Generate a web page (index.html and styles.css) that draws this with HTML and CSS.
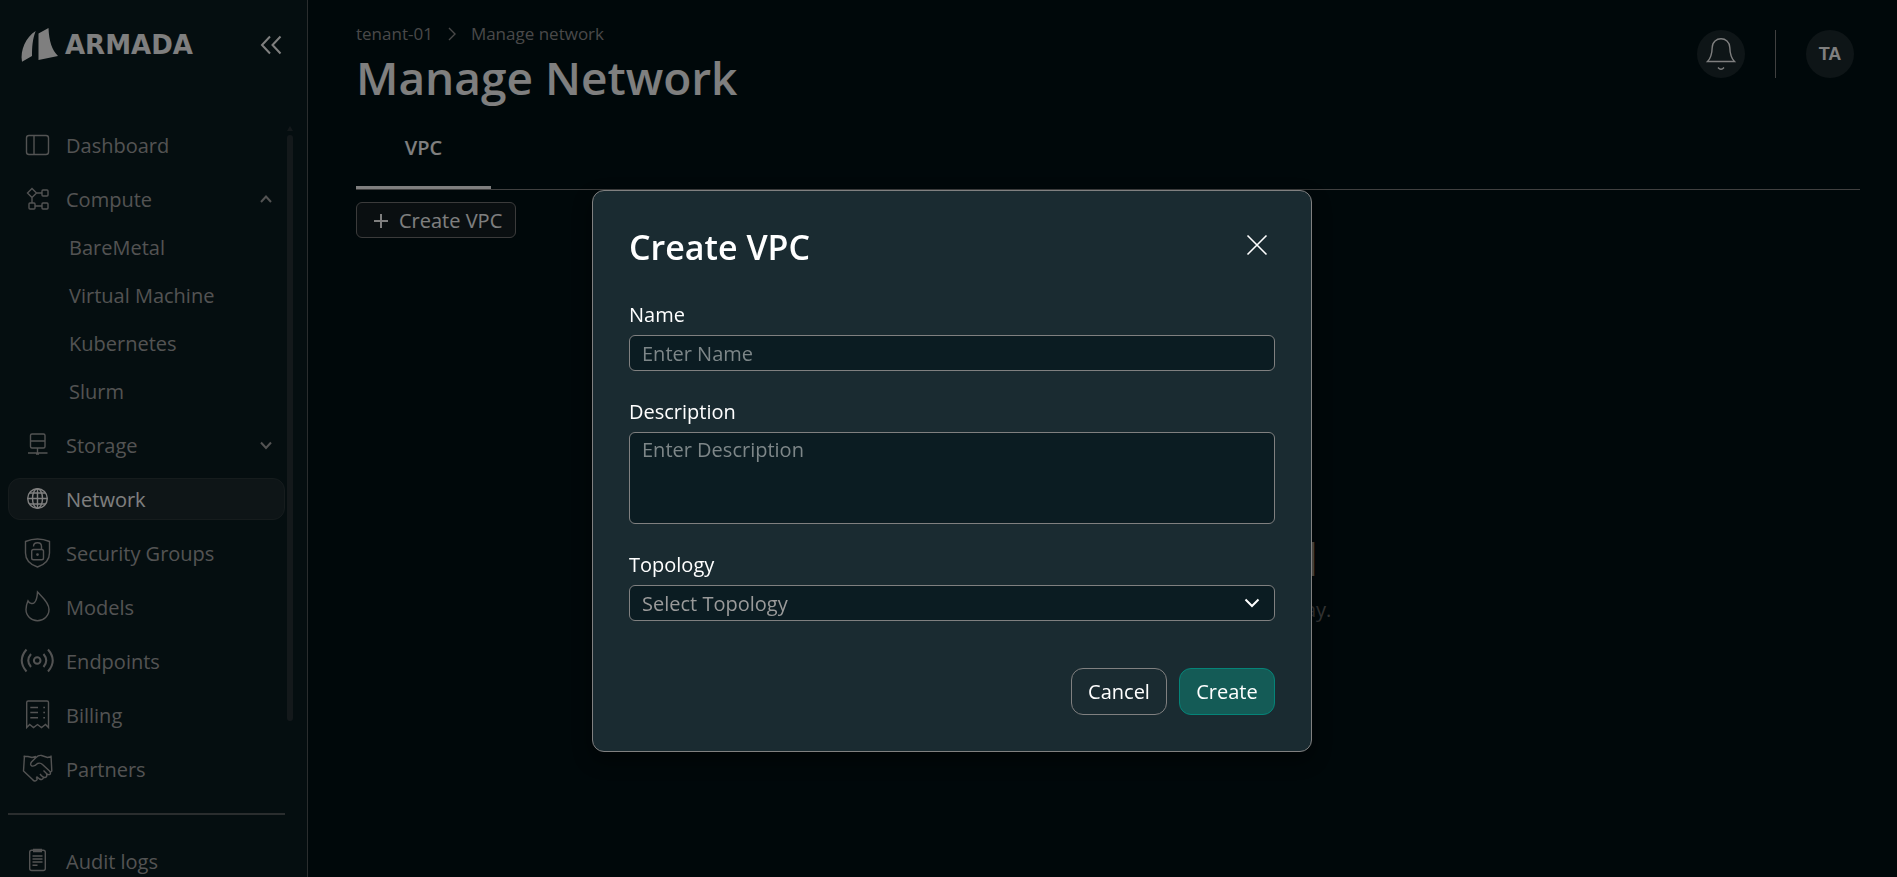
FILE: index.html
```html
<!DOCTYPE html>
<html lang="en">
<head>
    <meta charset="UTF-8">
    <meta name="viewport" content="width=device-width, initial-scale=1.0">
    <title>Manage Network</title>
    <link rel="stylesheet" href="styles.css">
</head>
<body>
    <div class="layout">
        <aside class="sidebar">
            <div class="brand">
                <svg class="brand-mark" width="40" height="36" viewBox="0 0 40 36">
                    <path d="M2 34.700C0 23 6 10 15.700 4C12.500 12 12 20 12 29Z"/>
                    <path d="M18.500 6.500L28.500 1C29 14 32 23 38 29L18.500 33Z"/>
                </svg>
                <span class="brand-name">ARMADA</span>
                <button class="collapse" aria-label="Collapse menu">
                    <svg class="icon-bold" width="24" height="24" viewBox="0 0 24 24"><path d="M11 3.500L3 12L11 20.500M21.500 3.500L13.500 12L21.500 20.500"/></svg>
                </button>
            </div>

            <div class="menu-scroll">
                <nav class="menu">
                    <a class="item" href="#">
                        <svg class="icon" viewBox="0 0 36 36"><rect x="7.500" y="8.500" width="22" height="19" rx="2.500"/><path d="M15 8.500V27.500"/></svg>
                        <span>Dashboard</span>
                    </a>
                    <a class="item" href="#">
                        <svg class="icon" viewBox="0 0 36 36"><path d="M13 7.500L17.500 12L13 16.500L8.500 12ZM17.500 12H23M13 16.500V22M16 25H23"/><rect x="23" y="9" width="6" height="6" rx="1"/><rect x="10" y="22" width="6" height="6" rx="1"/><rect x="23" y="22" width="6" height="6" rx="1"/></svg>
                        <span>Compute</span>
                        <svg class="chevron" viewBox="0 0 12 12"><path d="M1 9L6 3.500L11 9"/></svg>
                    </a>
                    <div class="submenu">
                        <a class="subitem" href="#">BareMetal</a>
                        <a class="subitem" href="#">Virtual Machine</a>
                        <a class="subitem" href="#">Kubernetes</a>
                        <a class="subitem" href="#">Slurm</a>
                    </div>
                    <a class="item" href="#">
                        <svg class="icon" viewBox="0 0 36 36"><rect x="11.500" y="7" width="14.500" height="14" rx="1.500"/><path d="M11.500 14H26M18.500 21V26.500M9 26H28.500M17 27H20"/></svg>
                        <span>Storage</span>
                        <svg class="chevron" viewBox="0 0 12 12"><path d="M1 3.500L6 9L11 3.500"/></svg>
                    </a>
                    <a class="item active" href="#">
                        <svg class="icon" viewBox="0 0 36 36"><circle cx="18.500" cy="17.500" r="9.800"/><ellipse cx="18.500" cy="17.500" rx="5" ry="9.800"/><path d="M18.500 7.500V27.500M8.500 17.500H28.500M10.500 12H26.500M10.500 23H26.500"/></svg>
                        <span>Network</span>
                    </a>
                    <a class="item" href="#">
                        <svg class="icon" viewBox="0 0 36 36"><path d="M6.500 6.500Q18.500 1.500 30.500 6.500V18Q30.500 28 18.500 32Q6.500 28 6.500 18Z"/><rect x="12.700" y="14.500" width="11.800" height="10.200" rx="1.800"/><path d="M14.500 11.500C14.500 6.500 22.500 6.500 22.500 11.500V14.500"/><circle cx="18.500" cy="19.600" r=".7"/></svg>
                        <span>Security Groups</span>
                    </a>
                    <a class="item" href="#">
                        <svg class="icon" viewBox="0 0 36 36"><path d="M18.500 3C22 7 30 13 30 20.500A11.500 11.200 0 0 1 7 20.500C7 17 7.800 14.500 9 11.800C10.500 14.500 13.500 15.500 15.500 13.500C18 11 18.300 7 18.500 3Z"/></svg>
                        <span>Models</span>
                    </a>
                    <a class="item" href="#">
                        <svg class="icon icon-bold" viewBox="0 0 36 36"><circle cx="18.200" cy="17.500" r="3.300"/><path d="M12 11Q6.500 17.500 12 24M24.500 11Q30 17.500 24.500 24M7.500 6.500Q-2 17.500 7.500 28.500M29 6.500Q38.500 17.500 29 28.500"/></svg>
                        <span>Endpoints</span>
                    </a>
                    <a class="item" href="#">
                        <svg class="icon" viewBox="0 0 36 36"><path d="M7.700 30.500V5.500Q7.700 4 9.200 4H28Q29.500 4 29.500 5.500V30.500L26.500 27.500L22.500 30.500L18.500 27.500L14.500 30.500L10.700 27.500ZM11.300 10.500H19M11.300 15.500H19M11.300 20.800H19M24.300 10.500H26M24.300 15.500H26M24.300 20.800H26"/></svg>
                        <span>Billing</span>
                    </a>
                    <a class="item" href="#">
                        <svg class="icon" viewBox="0 0 36 36"><path d="M5.500 4.500L4.500 20L13.500 28.500Q15.500 31 17.500 29.300Q19 28 17 26.500M4.500 5.500H9L13 6.500L17 5.500M32 4.500L32.800 20L31 21.500M32.500 5.500L28.500 6.500L22.500 4.500Q19.500 4 17 6.500L12.500 11Q10.500 14 13 15Q15.500 15.700 18.500 12.500Q21.500 11.500 23.500 13.500L30.500 20Q32.500 22.500 30.500 23.500Q29 24 27.500 22.500L24.500 19.500M27.500 23Q28.500 26 26 26.500Q24 26.700 21 23M24.500 26.500Q23.500 29.500 20.500 28L17.500 25.500"/></svg>
                        <span>Partners</span>
                    </a>
                    <hr>
                    <a class="item" href="#">
                        <svg class="icon" viewBox="0 0 36 36"><rect x="10.700" y="7.200" width="15.600" height="20.300" rx="2"/><path d="M14 6.500H23M14 8.500H23M13.500 13H23.500M13.500 16H23.500M13.500 19H23.500M13.500 22.200H18.500"/></svg>
                        <span>Audit logs</span>
                    </a>
                </nav>
                <div class="scrollbar">
                    <span class="scroll-arrow"></span>
                    <span class="scroll-thumb"></span>
                </div>
            </div>
        </aside>

        <main class="content">
            <header class="top">
                <div>
                    <div class="breadcrumb">
                        <a href="#">tenant-01</a>
                        <svg width="10" height="16" viewBox="0 0 10 16"><path d="M2 2L8 8L2 14"/></svg>
                        <a href="#">Manage network</a>
                    </div>
                    <h1>Manage Network</h1>
                </div>
                <div class="actions">
                    <button class="round" aria-label="Notifications">
                        <svg width="48" height="48" viewBox="0 0 48 48"><path d="M10.500 31.500C14 28 15 24 15.200 17.500C15.500 5.800 32.500 5.800 32.800 17.500C33 24 34 28 37.500 31.500ZM21 37.500Q24 41 27 37.500"/></svg>
                    </button>
                    <span class="divider"></span>
                    <button class="round avatar">TA</button>
                </div>
            </header>

            <div class="tabs">
                <button class="tab">VPC</button>
            </div>

            <button class="create-vpc">
                <svg width="16" height="16" viewBox="0 0 16 16"><path d="M8 1V15M1 8H15"/></svg>
                Create VPC
            </button>

            <section class="empty">
                <h2>No VPC Configured</h2>
                <p>There are currently no VPCs available to display.</p>
            </section>
        </main>
    </div>

    <div class="overlay">
        <form class="modal">
            <div class="modal-head">
                <h2>Create VPC</h2>
                <button type="button" class="close" aria-label="Close">
                    <svg width="22" height="22" viewBox="0 0 22 22"><path d="M1.500 1.500L20.500 20.500M20.500 1.500L1.500 20.500"/></svg>
                </button>
            </div>
            <div class="field">
                <label for="name">Name</label>
                <input id="name" type="text" placeholder="Enter Name">
            </div>
            <div class="field">
                <label for="description">Description</label>
                <textarea id="description" placeholder="Enter Description"></textarea>
            </div>
            <div class="field">
                <label for="topology">Topology</label>
                <div class="select-wrap">
                    <select id="topology">
                        <option>Select Topology</option>
                    </select>
                    <svg width="16" height="10" viewBox="0 0 16 10"><path d="M1.500 1.500L8 8L14.500 1.500"/></svg>
                </div>
            </div>
            <div class="modal-actions">
                <button type="button" class="btn">Cancel</button>
                <button type="submit" class="btn primary">Create</button>
            </div>
        </form>
    </div>
</body>
</html>
```
FILE: styles.css
```css
:root {
    --page: #001014;
    --sidebar: #0a1c20;
    --panel: #1a2b31;
    --field: #0b1c22;
    --soft: #1c2a2e;
    --line: #808080;
    --muted: #a6a6a6;
}

* {
    margin: 0;
    padding: 0;
    box-sizing: border-box;
    font-family: 'Segoe UI', 'Open Sans', sans-serif;
}

body {
    background-color: var(--page);
    color: #fff;
    font-size: 20px;
    line-height: 28px;
}

a {
    color: inherit;
    text-decoration: none;
}

button {
    background: none;
    border: none;
    color: inherit;
    font-size: 20px;
    line-height: 28px;
    cursor: pointer;
}

svg {
    display: block;
    flex-shrink: 0;
    fill: none;
    stroke: currentColor;
    stroke-width: 1.4;
}

.icon-bold {
    stroke-width: 2;
}

.layout {
    display: flex;
    height: 100vh;
    overflow: hidden;
}

/* Sidebar */
.sidebar {
    display: flex;
    flex-direction: column;
    width: 308px;
    flex-shrink: 0;
    background-color: var(--sidebar);
    border-right: 1px solid #555b5d;
}

.brand {
    display: flex;
    align-items: center;
    height: 90px;
    padding: 0 24px 0 20px;
    margin-bottom: 36px;
}

.brand-mark {
    fill: #fff;
    stroke: none;
}

.brand-name {
    font-family: 'DejaVu Sans', sans-serif;
    font-size: 26px;
    font-weight: bold;
    margin-left: 5px;
}

.collapse {
    margin-left: auto;
}

.menu-scroll {
    display: flex;
    flex: 1;
    min-height: 0;
    gap: 2px;
    padding-left: 8px;
    padding-right: 14px;
    overflow: hidden;
}

.menu {
    flex: 1;
    display: flex;
    flex-direction: column;
    gap: 12px;
    color: var(--muted);
}

.item {
    display: flex;
    align-items: center;
    flex-shrink: 0;
    gap: 11px;
    height: 42px;
    padding: 0 12px 0 10px;
    border: 1px solid transparent;
    border-radius: 12px;
}

.item span {
    padding-top: 2px;
}

.menu .item:first-child {
    margin-top: -2px;
}

.item.active {
    color: #fff;
    background-color: var(--soft);
    border-color: #2c383b;
}

.icon {
    width: 36px;
    height: 36px;
}

.chevron {
    width: 12px;
    height: 12px;
    margin-left: auto;
    stroke-width: 2;
}

.submenu {
    display: flex;
    flex-direction: column;
    gap: 6px;
    margin-top: -6px;
}

.subitem {
    height: 42px;
    line-height: 44px;
    padding-left: 61px;
}

.menu hr {
    flex-shrink: 0;
    height: 2px;
    margin: 11px 0 13px;
    border: none;
    background-color: #555b5d;
}

.scrollbar {
    width: 6px;
}

.scroll-arrow {
    display: block;
    border: 3px solid transparent;
    border-top: none;
    border-bottom: 5px solid #283236;
    margin-bottom: 4px;
}

.scroll-thumb {
    display: block;
    height: 78%;
    border-radius: 3px;
    background-color: #283236;
}

/* Content */
.content {
    flex: 1;
    padding: 20px 37px 0 48px;
}

.top {
    display: flex;
    justify-content: space-between;
}

.breadcrumb {
    display: flex;
    align-items: center;
    gap: 14px;
    font-size: 17px;
    color: #929292;
}

h1 {
    padding-bottom: 2px;
    font-size: 46px;
    font-weight: 600;
    line-height: 58px;
}

.actions {
    display: flex;
    gap: 30px;
    margin: 10px 6px 0 0;
}

.round {
    width: 48px;
    height: 48px;
    border-radius: 50%;
    background-color: var(--soft);
}

.avatar {
    font-family: 'Liberation Sans', Arial, sans-serif;
    font-size: 18px;
    font-weight: bold;
}

.divider {
    width: 1px;
    height: 48px;
    background-color: var(--line);
}

.tabs {
    display: flex;
    border-bottom: 1px solid var(--line);
}

.tab {
    min-width: 135px;
    padding: 26px 48px 24px;
    border-bottom: 3px solid #fff;
    font-weight: 600;
}

.create-vpc {
    display: flex;
    align-items: center;
    gap: 10px;
    height: 36px;
    margin-top: 12px;
    padding: 1px 13px 0 16px;
    border: 1px solid #777;
    border-radius: 6px;
    background-color: #141f23;
}

.create-vpc svg {
    stroke-width: 2;
}

.empty {
    margin-top: 290px;
    text-align: center;
    color: #6b6b6b;
}

.empty h2 {
    font-size: 46px;
    font-weight: 600;
    line-height: 60px;
    color: #b0a8a0;
}

.empty p {
    margin-top: 8px;
}

/* Modal */
.overlay {
    position: fixed;
    inset: 0;
    display: flex;
    justify-content: center;
    align-items: flex-start;
    padding: 190px 0 0 7px;
    background-color: rgba(0, 0, 0, 0.5);
}

.modal {
    width: 720px;
    max-width: 100%;
    padding: 36px;
    background-color: var(--panel);
    border: 1px solid var(--line);
    border-radius: 12px;
    box-shadow: 0 8px 20px rgba(0, 0, 0, 0.5);
}

.modal-head {
    display: flex;
    justify-content: space-between;
    margin-bottom: 34px;
}

.modal-head h2 {
    font-size: 34px;
    font-weight: 600;
    line-height: 40px;
}

.close {
    height: 36px;
    padding: 0 7px;
}

.close svg {
    stroke-width: 1.6;
}

.field {
    display: flex;
    flex-direction: column;
    gap: 6px;
    margin-bottom: 27px;
}

.field label {
    font-weight: 500;
}

.field input,
.field textarea,
.field select {
    display: block;
    width: 100%;
    height: 36px;
    padding: 1px 12px 0;
    background-color: var(--field);
    border: 1px solid var(--line);
    border-radius: 6px;
    color: #9a9a9a;
    font-size: 20px;
    line-height: 28px;
    appearance: none;
}

.field textarea {
    height: 92px;
    padding-top: 3px;
    resize: none;
}

.field ::placeholder {
    color: #7d8688;
}

.select-wrap {
    position: relative;
}

.select-wrap svg {
    position: absolute;
    right: 15px;
    top: 13px;
    stroke-width: 2;
    pointer-events: none;
}

.modal-actions {
    display: flex;
    justify-content: flex-end;
    gap: 12px;
    margin-top: 47px;
}

.btn {
    width: 96px;
    height: 47px;
    border: 1px solid var(--line);
    border-radius: 12px;
    font-weight: 500;
}

.btn.primary {
    background-color: #145b56;
    border-color: #058478;
}
```
